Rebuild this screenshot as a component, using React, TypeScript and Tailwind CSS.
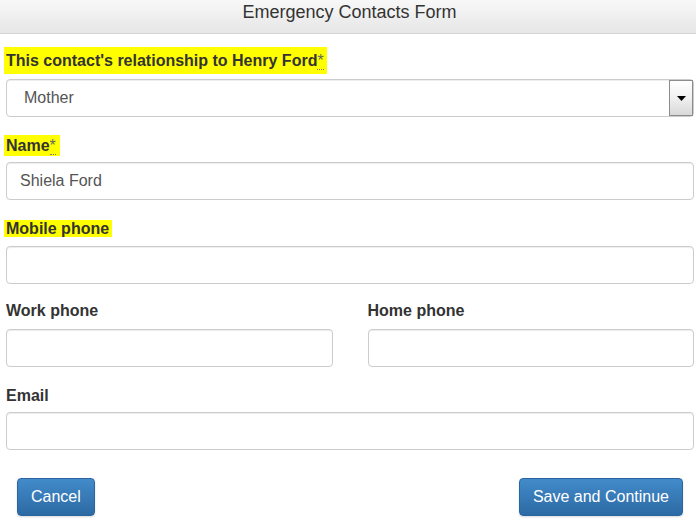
const inputBox =
  'h-[38px] w-full rounded-[4px] border border-[#cccccc] bg-white shadow-[inset_0_1px_1px_rgba(0,0,0,0.075)]';

function Req() {
  return (
    <abbr
      title="required"
      className="cursor-help border-b border-dotted border-[#777777] font-normal text-[#666666] no-underline"
    >
      *
    </abbr>
  );
}

export default function App() {
  return (
    <div className="min-h-[520px] w-[696px] bg-white font-['Liberation_Sans',Arial,sans-serif] text-[#333333]">
      <div className="h-[34px] border-b border-[#d6d6d6] bg-gradient-to-b from-[#f8f8f8] to-[#e6e6e6] pt-[1px] pl-[3px] text-center text-[18px] leading-[22px] text-[#333333]">
        Emergency Contacts Form
      </div>

      <div className="pl-[6px] pr-[2px]">
        {/* relationship */}
        <div className="mt-[17px] mb-[8px] text-[16px] font-bold leading-[20px]">
          <span className="-ml-[2px] bg-[#ffff00] py-[5px] pl-[2px] pr-[3px]">
            This contact's relationship to Henry Ford
            <Req />
          </span>
        </div>
        <div className={`relative ${inputBox} flex items-center pl-[17px] text-[16px] text-[#555555]`}>
          Mother
          <div className="absolute top-0 right-0 bottom-0 flex w-[24px] items-center justify-center border border-[#8c8c8c] bg-gradient-to-b from-[#ffffff] via-[#f0f0f0] to-[#d9d9d9]">
            <svg width="9" height="5" viewBox="0 0 9 5">
              <path d="M0 0 L9 0 L4.5 5 Z" fill="#000000" />
            </svg>
          </div>
        </div>

        {/* name */}
        <div className="mt-[19px] mb-[6px] text-[16px] font-bold leading-[20px]">
          <span className="-ml-[2px] bg-[#ffff00] py-[2px] pl-[2px] pr-[4px]">
            Name
            <Req />
          </span>
        </div>
        <div className={`${inputBox} flex items-center pl-[13px] text-[16px] text-[#555555]`}>Shiela Ford</div>

        {/* mobile */}
        <div className="mt-[19px] mb-[7px] text-[16px] font-bold leading-[20px]">
          <span className="-ml-[2px] bg-[#ffff00] pl-[2px] pr-[3px]">Mobile phone</span>
        </div>
        <div className={inputBox} />

        {/* work / home */}
        <div className="mt-[17px] grid grid-cols-2 gap-[35px]">
          <div>
            <div className="mb-[8px] text-[16px] font-bold leading-[20px]">Work phone</div>
            <div className={inputBox} />
          </div>
          <div>
            <div className="mb-[8px] text-[16px] font-bold leading-[20px]">Home phone</div>
            <div className={inputBox} />
          </div>
        </div>

        {/* email */}
        <div className="mt-[19px] mb-[6px] text-[16px] font-bold leading-[20px]">Email</div>
        <div className={inputBox} />

        <div className="mt-[28px] flex items-center justify-between pl-[11px] pr-[11px]">
          <button className="h-[38px] rounded-[4px] border border-[#2a65a0] bg-gradient-to-b from-[#428bca] to-[#2c6aa4] px-[13px] text-[16px] text-white shadow-[0_1px_2px_rgba(0,0,0,0.15)]">
            Cancel
          </button>
          <button className="h-[38px] rounded-[4px] border border-[#2a65a0] bg-gradient-to-b from-[#428bca] to-[#2c6aa4] px-[13px] text-[16px] text-white shadow-[0_1px_2px_rgba(0,0,0,0.15)]">
            Save and Continue
          </button>
        </div>
      </div>
    </div>
  );
}
